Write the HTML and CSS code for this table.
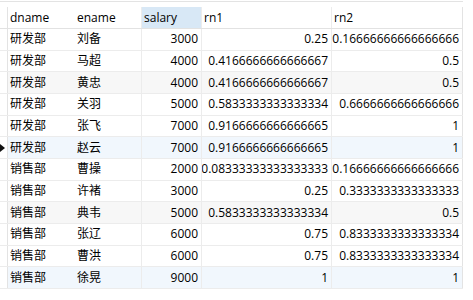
FILE: index.html
```html
<!DOCTYPE html>
<html lang="zh">
<head>
    <meta charset="UTF-8">
    <meta name="viewport" content="width=device-width, initial-scale=1.0">
    <title>rn1 / rn2</title>
    <link rel="stylesheet" href="styles.css">
</head>
<body>
    <div class="grid">
        <div class="top-edge"></div>

        <!-- cabecera -->
        <div class="row head">
            <div class="cell gutter"></div>
            <div class="cell c-dname">dname</div>
            <div class="cell c-ename">ename</div>
            <div class="cell c-salary active">salary</div>
            <div class="cell c-rn1">rn1</div>
            <div class="cell c-rn2">rn2</div>
        </div>

        <div class="row">
            <div class="cell gutter"></div>
            <div class="cell c-dname">研发部</div>
            <div class="cell c-ename">刘备</div>
            <div class="cell c-salary num">3000</div>
            <div class="cell c-rn1 num">0.25</div>
            <div class="cell c-rn2 num">0.16666666666666666</div>
        </div>
        <div class="row">
            <div class="cell gutter"></div>
            <div class="cell c-dname">研发部</div>
            <div class="cell c-ename">马超</div>
            <div class="cell c-salary num">4000</div>
            <div class="cell c-rn1 num">0.4166666666666667</div>
            <div class="cell c-rn2 num">0.5</div>
        </div>
        <div class="row alt">
            <div class="cell gutter"></div>
            <div class="cell c-dname">研发部</div>
            <div class="cell c-ename">黄忠</div>
            <div class="cell c-salary num">4000</div>
            <div class="cell c-rn1 num">0.4166666666666667</div>
            <div class="cell c-rn2 num">0.5</div>
        </div>
        <div class="row">
            <div class="cell gutter"></div>
            <div class="cell c-dname">研发部</div>
            <div class="cell c-ename">关羽</div>
            <div class="cell c-salary num">5000</div>
            <div class="cell c-rn1 num">0.5833333333333334</div>
            <div class="cell c-rn2 num">0.6666666666666666</div>
        </div>
        <div class="row">
            <div class="cell gutter"></div>
            <div class="cell c-dname">研发部</div>
            <div class="cell c-ename">张飞</div>
            <div class="cell c-salary num">7000</div>
            <div class="cell c-rn1 num">0.9166666666666665</div>
            <div class="cell c-rn2 num">1</div>
        </div>
        <div class="row selected">
            <div class="cell gutter"><span class="pointer"></span></div>
            <div class="cell c-dname">研发部</div>
            <div class="cell c-ename">赵云</div>
            <div class="cell c-salary num">7000</div>
            <div class="cell c-rn1 num">0.9166666666666665</div>
            <div class="cell c-rn2 num">1</div>
        </div>
        <div class="row">
            <div class="cell gutter"></div>
            <div class="cell c-dname">销售部</div>
            <div class="cell c-ename">曹操</div>
            <div class="cell c-salary num">2000</div>
            <div class="cell c-rn1 num">0.08333333333333333</div>
            <div class="cell c-rn2 num">0.16666666666666666</div>
        </div>
        <div class="row">
            <div class="cell gutter"></div>
            <div class="cell c-dname">销售部</div>
            <div class="cell c-ename">许褚</div>
            <div class="cell c-salary num">3000</div>
            <div class="cell c-rn1 num">0.25</div>
            <div class="cell c-rn2 num">0.3333333333333333</div>
        </div>
        <div class="row alt">
            <div class="cell gutter"></div>
            <div class="cell c-dname">销售部</div>
            <div class="cell c-ename">典韦</div>
            <div class="cell c-salary num">5000</div>
            <div class="cell c-rn1 num">0.5833333333333334</div>
            <div class="cell c-rn2 num">0.5</div>
        </div>
        <div class="row">
            <div class="cell gutter"></div>
            <div class="cell c-dname">销售部</div>
            <div class="cell c-ename">张辽</div>
            <div class="cell c-salary num">6000</div>
            <div class="cell c-rn1 num">0.75</div>
            <div class="cell c-rn2 num">0.8333333333333334</div>
        </div>
        <div class="row">
            <div class="cell gutter"></div>
            <div class="cell c-dname">销售部</div>
            <div class="cell c-ename">曹洪</div>
            <div class="cell c-salary num">6000</div>
            <div class="cell c-rn1 num">0.75</div>
            <div class="cell c-rn2 num">0.8333333333333334</div>
        </div>
        <div class="row selected">
            <div class="cell gutter"></div>
            <div class="cell c-dname">销售部</div>
            <div class="cell c-ename">徐晃</div>
            <div class="cell c-salary num">9000</div>
            <div class="cell c-rn1 num">1</div>
            <div class="cell c-rn2 num">1</div>
        </div>
    </div>
</body>
</html>
```

FILE: styles.css
```css
body {
    margin: 0;
    background-color: white;
    font-family: 'Open Sans', 'Noto Sans CJK SC', sans-serif;
    font-size: 12px;
    color: #000;
}
.grid {
    width: 463px;
}
.top-edge {
    margin-top: 1px;
    height: 5px;
    border-top: 1px solid #e3e3e3;
}
.row {
    display: flex;
    box-sizing: border-box;
    height: 21.67px;
    border-bottom: 1px solid #ececec;
}
.row.head {
    height: 22px;
    border-bottom: 1px solid #e2e2e2;
}
.row.alt {
    background-color: #f7f7f7;
}
.row.selected {
    background-color: #f1f7fd;
}
.cell {
    box-sizing: border-box;
    display: flex;
    align-items: center;
    padding: 0 3px 0 2px;
    white-space: nowrap;
    overflow: hidden;
    line-height: 1;
}
.num {
    justify-content: flex-end;
}
.gutter {
    width: 8px;
    padding: 0;
    border-right: 1px solid #e3e3e3;
    background-color: white;
}
.c-dname {
    width: 67px;
}
.c-ename {
    width: 67px;
    border-right: 1px solid #ececec;
}
.c-salary {
    width: 60px;
    border-right: 1px solid #ececec;
}
.c-rn1 {
    width: 130px;
    border-right: 1px solid #ececec;
}
.c-rn2 {
    width: 131px;
    border-right: 1px solid #e3e3e3;
}
.head .cell {
    padding-top: 1px;
}
.head .active {
    background-color: #d8e8f6;
}
.pointer {
    width: 0;
    height: 0;
    border-top: 4px solid transparent;
    border-bottom: 4px solid transparent;
    border-left: 5px solid #111;
}
```
